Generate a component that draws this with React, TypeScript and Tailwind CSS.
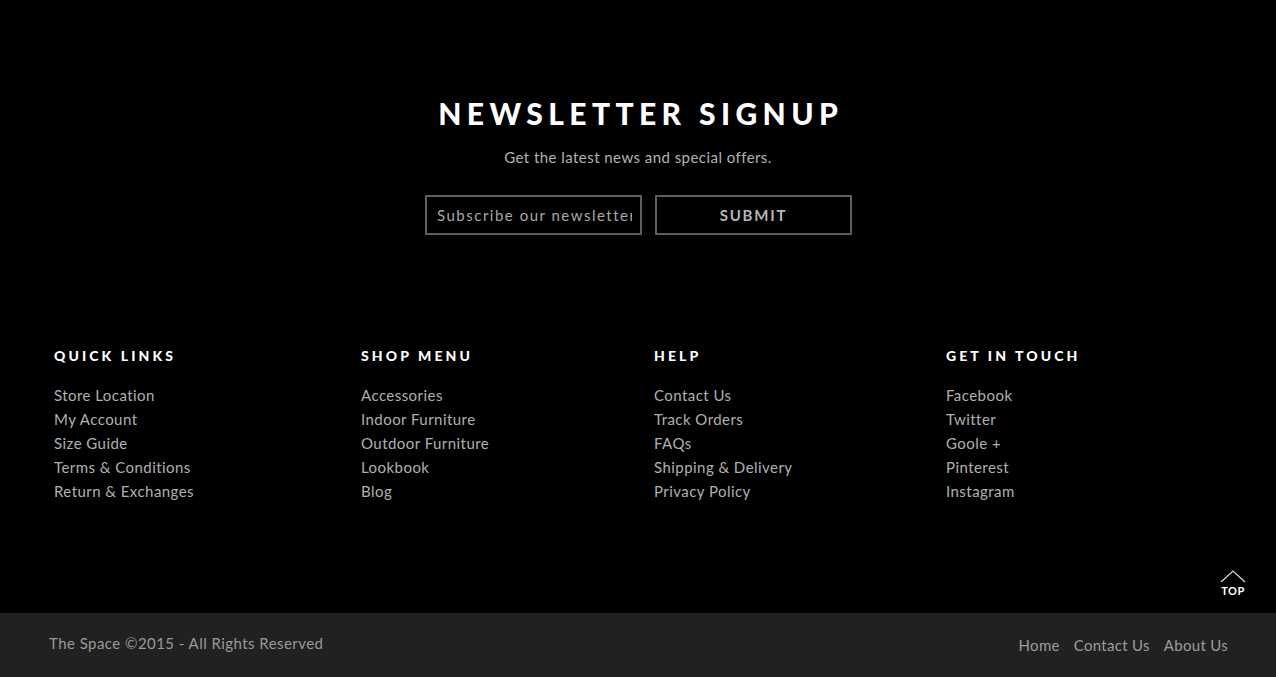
const columns = [
  {
    title: "Quick Links",
    links: ["Store Location", "My Account", "Size Guide", "Terms & Conditions", "Return & Exchanges"],
  },
  {
    title: "Shop Menu",
    links: ["Accessories", "Indoor Furniture", "Outdoor Furniture", "Lookbook", "Blog"],
  },
  {
    title: "Help",
    links: ["Contact Us", "Track Orders", "FAQs", "Shipping & Delivery", "Privacy Policy"],
  },
  {
    title: "Get In Touch",
    links: ["Facebook", "Twitter", "Goole +", "Pinterest", "Instagram"],
  },
];

export default function App() {
  return (
    <div className="w-[1276px] h-[677px] bg-black font-['Lato',sans-serif] overflow-hidden flex flex-col">
      {/* Newsletter */}
      <div className="flex flex-col items-center pt-[96px]">
        <h2 className="text-white text-[30px] leading-[34px] font-black tracking-[0.18em] pl-[0.18em]">
          NEWSLETTER SIGNUP
        </h2>
        <p className="mt-[17px] text-[15px] leading-[20px] text-[#b3b3b3] tracking-[0.03em]">
          Get the latest news and special offers.
        </p>
        <div className="mt-[28px] pl-[1px] flex gap-[13px]">
          <input
            type="text"
            placeholder="Subscribe our newsletter"
            className="w-[217px] h-[40px] border-2 border-[#5e5e5e] bg-black pl-[10px] pr-[8px] text-[15px] tracking-[0.1em] text-[#aaa] placeholder:text-[#a8a8a8] outline-none"
          />
          <button className="w-[197px] h-[40px] border-2 border-[#5e5e5e] bg-black text-[15px] font-bold tracking-[0.12em] text-[#b5b5b5]">
            SUBMIT
          </button>
        </div>
      </div>

      {/* Link columns */}
      <div className="mt-[111px] pl-[54px] grid grid-cols-[307px_293px_292px_1fr]">
        {columns.map((col) => (
          <div key={col.title}>
            <h3 className="text-white text-[14px] leading-[20px] font-black uppercase tracking-[0.22em]">
              {col.title}
            </h3>
            <ul className="mt-[17px] flex flex-col">
              {col.links.map((link) => (
                <li key={link} className="text-[15px] leading-[24px] text-[#b0b0b0] tracking-[0.03em]">
                  {link}
                </li>
              ))}
            </ul>
          </div>
        ))}
      </div>

      {/* Top button */}
      <div className="mt-auto flex justify-end pr-[30px] pb-[16px]">
        <div className="flex flex-col items-center text-white">
          <svg width="26" height="13" viewBox="0 0 26 13" fill="none" stroke="#ddd" strokeWidth="1.2">
            <path d="M1 12 L13 1 L25 12" />
          </svg>
          <span className="text-[11px] leading-[12px] font-bold tracking-[0.05em] mt-[2px]">TOP</span>
        </div>
      </div>

      {/* Bottom bar */}
      <div className="h-[64px] shrink-0 bg-[#212121] flex items-start justify-between pl-[49px] pr-[48px]">
        <p className="mt-[21px] text-[15px] leading-[18px] text-[#9a9a9a] tracking-[0.03em]">
          The Space ©2015 - All Rights Reserved
        </p>
        <nav className="mt-[23px] flex gap-[14px] text-[15px] leading-[18px] text-[#9d9d9d] tracking-[0.02em]">
          <span>Home</span>
          <span>Contact Us</span>
          <span>About Us</span>
        </nav>
      </div>
    </div>
  );
}
